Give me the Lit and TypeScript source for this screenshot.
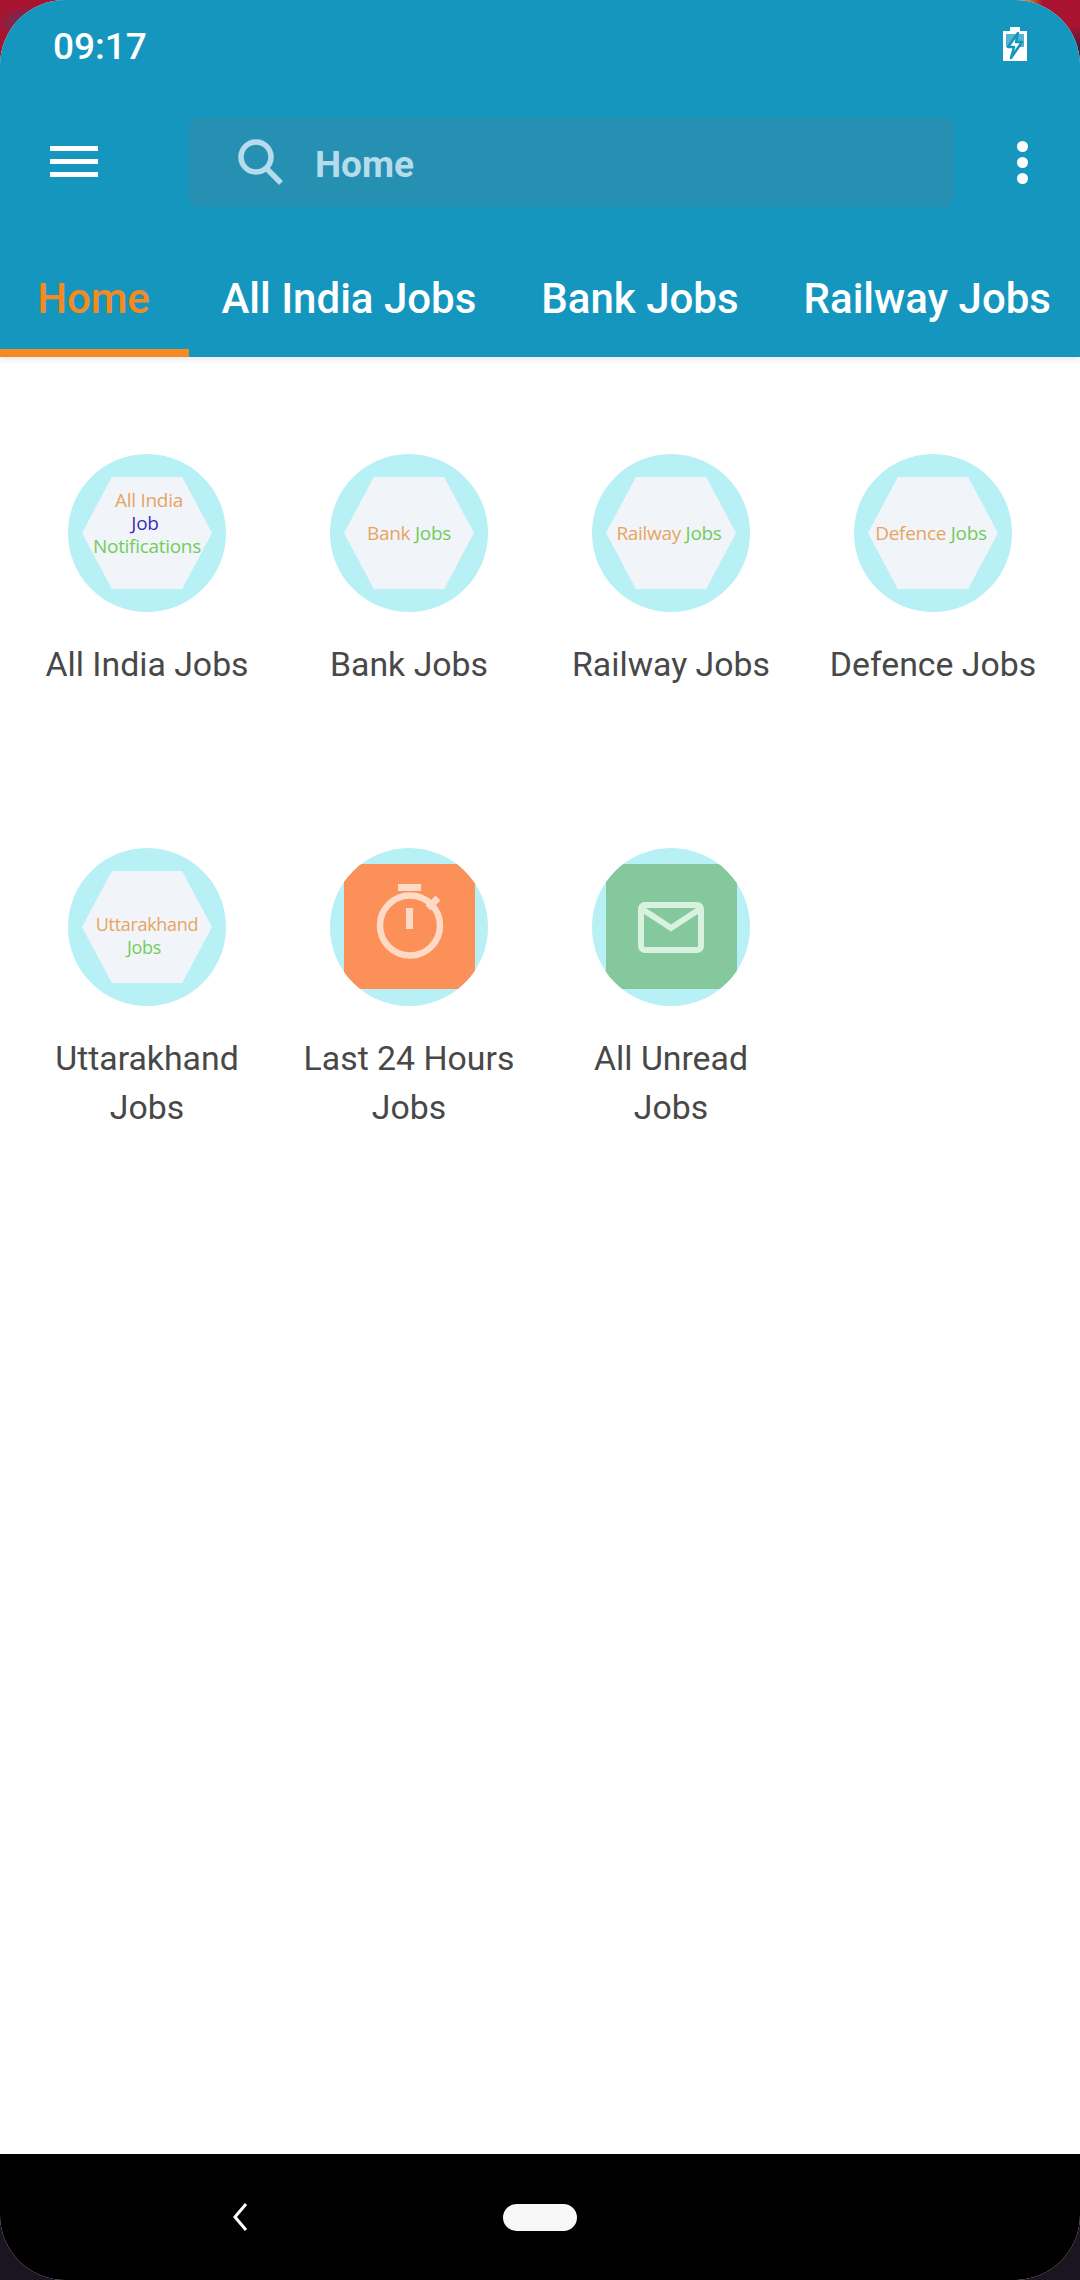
import { LitElement, html, css, svg } from 'lit';
import { customElement } from 'lit/decorators.js';

type HexLine = { parts: { text: string; color: string }[]; shift?: number };

const ORANGE = '#e9a35f';
const GREEN = '#72cc5c';
const BLUE = '#3b2fb4';

const tabs = ['Home', 'All India Jobs', 'Bank Jobs', 'Railway Jobs'];

const stopwatch = svg`
  <rect x="54" y="20" width="23" height="7"/>
  <rect x="62" y="44" width="7" height="21"/>
  <circle cx="66" cy="61.5" r="30" fill="none" stroke="#fddac6" stroke-width="6.5"/>
  <line x1="84" y1="44" x2="94" y2="34" stroke="#fddac6" stroke-width="7"/>
`;

const envelope = svg`
  <rect x="35" y="41" width="60" height="45" rx="4" fill="none" stroke="#d9f1df" stroke-width="6"/>
  <polyline points="36,45 65,64 94,45" fill="none" stroke="#d9f1df" stroke-width="6"/>
`;

const items: { label: string; lines?: HexLine[]; top?: number; left?: number; size?: number; tile?: string }[] = [
  {
    label: 'All India Jobs',
    top: -10,
    lines: [
      { parts: [{ text: 'All India', color: ORANGE }], shift: 2 },
      { parts: [{ text: 'Job', color: BLUE }], shift: -2 },
      { parts: [{ text: 'Notifications', color: GREEN }] },
    ],
  },
  { label: 'Bank Jobs', lines: [{ parts: [{ text: 'Bank', color: ORANGE }, { text: ' Jobs', color: GREEN }] }] },
  { label: 'Railway Jobs', left: -2, lines: [{ parts: [{ text: 'Railway', color: ORANGE }, { text: ' Jobs', color: GREEN }] }] },
  { label: 'Defence Jobs', left: -2, lines: [{ parts: [{ text: 'Defence', color: ORANGE }, { text: ' Jobs', color: GREEN }] }] },
  {
    label: 'Uttarakhand Jobs',
    top: 9,
    size: 18,
    lines: [
      { parts: [{ text: 'Uttarakhand', color: ORANGE }] },
      { parts: [{ text: 'Jobs', color: GREEN }], shift: -3 },
    ],
  },
  { label: 'Last 24 Hours Jobs', tile: 'timer' },
  { label: 'All Unread Jobs', tile: 'mail' },
];

@customElement('app-root')
export class AppRoot extends LitElement {
  static styles = css`
    :host {
      display: block;
      width: 1080px;
      height: 2280px;
      font-family: Roboto, sans-serif;
      background:
        radial-gradient(circle at 1025px 0, #d29a26 0, transparent 18px),
        radial-gradient(circle at 1080px 50px, #3d1a3c 0, transparent 24px),
        radial-gradient(ellipse 30px 16px at 28px 22px, #4f3a68 0, transparent 100%),
        linear-gradient(#a8142f 0, #a8142f 100px, #1a1520 100px);
    }

    .screen {
      display: flex;
      flex-direction: column;
      height: 2280px;
      background: #fff;
      border-radius: 65px;
      overflow: hidden;
    }

    .header {
      background: #1596bf;
      color: #fff;
      box-shadow: 0 2px 6px rgba(0, 0, 0, 0.1);
      flex: none;
    }

    .status {
      display: flex;
      justify-content: space-between;
      align-items: center;
      height: 92px;
      padding: 0 53px 0 53px;
      font-size: 37px;
      font-weight: 500;
    }

    .status svg {
      display: block;
      margin-top: -4px;
    }

    .toolbar {
      display: flex;
      align-items: center;
      height: 90px;
      margin-top: 25px;
      padding-left: 50px;
    }

    .toolbar .menu {
      display: block;
      flex: none;
    }

    .search {
      display: flex;
      align-items: center;
      width: 765px;
      height: 90px;
      margin-left: 91px;
      padding-left: 48px;
      box-sizing: border-box;
      background: #2690b2;
      border-radius: 10px;
      color: #b6dcec;
      font-size: 37px;
      font-weight: 700;
    }

    .search svg {
      display: block;
      margin-right: 32px;
    }

    .search span {
      padding-top: 4px;
    }

    .dots {
      display: flex;
      flex-direction: column;
      gap: 5px;
      margin-left: 63px;
    }

    .dots span {
      width: 11px;
      height: 11px;
      border-radius: 50%;
      background: #fff;
    }

    .tabs {
      display: flex;
      margin-top: 40px;
      height: 110px;
      overflow: hidden;
    }

    .tab {
      flex: none;
      display: flex;
      align-items: center;
      justify-content: center;
      min-width: 189px;
      padding: 0 32.5px;
      box-sizing: border-box;
      border-bottom: 8px solid transparent;
      font-size: 42px;
      font-weight: 500;
    }

    .tab.active {
      padding: 0 34px 0 32px;
      color: #f48a22;
      border-bottom-color: #f48a22;
    }

    .content {
      flex: 1;
      display: grid;
      grid-template-columns: repeat(4, 262px);
      grid-auto-rows: 394px;
      padding: 97px 0 0 16px;
    }

    .item {
      display: flex;
      flex-direction: column;
      align-items: center;
    }

    .circle {
      display: flex;
      align-items: center;
      justify-content: center;
      width: 158px;
      height: 158px;
      border-radius: 50%;
      background: #b7f0f5;
      overflow: hidden;
      flex: none;
    }

    .hex {
      display: flex;
      flex-direction: column;
      align-items: center;
      justify-content: center;
      width: 130px;
      height: 112px;
      background: #f1f5fa;
      clip-path: polygon(23% 0, 77% 0, 100% 50%, 77% 100%, 23% 100%, 0 50%);
      font-family: 'Open Sans', sans-serif;
      font-size: 19px;
      line-height: 23px;
      white-space: nowrap;
    }

    .hex div {
      position: relative;
      letter-spacing: -0.3px;
    }

    .tile {
      flex: none;
      display: block;
      width: 131px;
      height: 125px;
      margin-top: -2px;
    }

    .tile.timer {
      background: #fb9058;
      fill: #fddac6;
    }

    .tile.mail {
      background: #85c89e;
    }

    .label {
      margin-top: 28px;
      padding: 0 18px;
      font-size: 33.8px;
      line-height: 49px;
      color: #484848;
      text-align: center;
    }

    .nav {
      flex: none;
      display: flex;
      align-items: center;
      height: 126px;
      padding-left: 233px;
      background: #000;
    }

    .nav svg {
      display: block;
    }

    .pill {
      width: 74px;
      height: 27px;
      margin-left: 254px;
      border-radius: 13.5px;
      background: #f8f8f8;
    }
  `;

  renderIcon(item: (typeof items)[number]) {
    if (item.tile) {
      return html`<svg class="tile ${item.tile}" viewBox="0 0 131 125">
        ${item.tile === 'timer' ? stopwatch : envelope}
      </svg>`;
    }
    return html`<div class="hex" style="font-size:${item.size ?? 19}px">
      ${item.lines!.map(
        (line) => html`<div style="left:${(item.left ?? 0) + (line.shift ?? 0)}px;top:${item.top ?? 0}px">${line.parts.map(
          (p) => html`<span style="color:${p.color}">${p.text}</span>`
        )}</div>`
      )}
    </div>`;
  }

  render() {
    return html`
      <div class="screen">
        <div class="header">
          <div class="status">
            <span>09:17</span>
            <svg width="24" height="34" viewBox="0 0 24 34">
              <path d="M7 0h10v4h7v30H0V4h7z" fill="#fff"/>
              <rect x="3" y="7" width="18" height="13" fill="#55b2d0"/>
              <path d="M15 6L5 20h6L8 31 19 15h-6z" fill="#fff" stroke="#1596bf" stroke-width="2.5" stroke-linejoin="round"/>
            </svg>
          </div>
          <div class="toolbar">
            <svg class="menu" width="48" height="32" viewBox="0 0 48 32" fill="#fff">
              <rect y="0" width="48" height="5"/>
              <rect y="13" width="48" height="5"/>
              <rect y="26" width="48" height="5"/>
            </svg>
            <div class="search">
              <svg width="46" height="46" viewBox="0 0 46 46" fill="none" stroke="#b6dcec" stroke-width="5.5">
                <circle cx="19" cy="18" r="15"/>
                <line x1="29" y1="29" x2="44" y2="44"/>
              </svg>
              <span>Home</span>
            </div>
            <div class="dots"><span></span><span></span><span></span></div>
          </div>
          <div class="tabs">
            ${tabs.map((t, i) => html`<div class="tab ${i === 0 ? 'active' : ''}">${t}</div>`)}
          </div>
        </div>
        <div class="content">
          ${items.map(
            (item) => html`<div class="item">
              <div class="circle">${this.renderIcon(item)}</div>
              <div class="label">${item.label}</div>
            </div>`
          )}
        </div>
        <div class="nav">
          <svg width="16" height="28" viewBox="0 0 16 28" fill="none" stroke="#fff" stroke-width="3">
            <polyline points="13,1 2,14 13,27"/>
          </svg>
          <div class="pill"></div>
        </div>
      </div>
    `;
  }
}
